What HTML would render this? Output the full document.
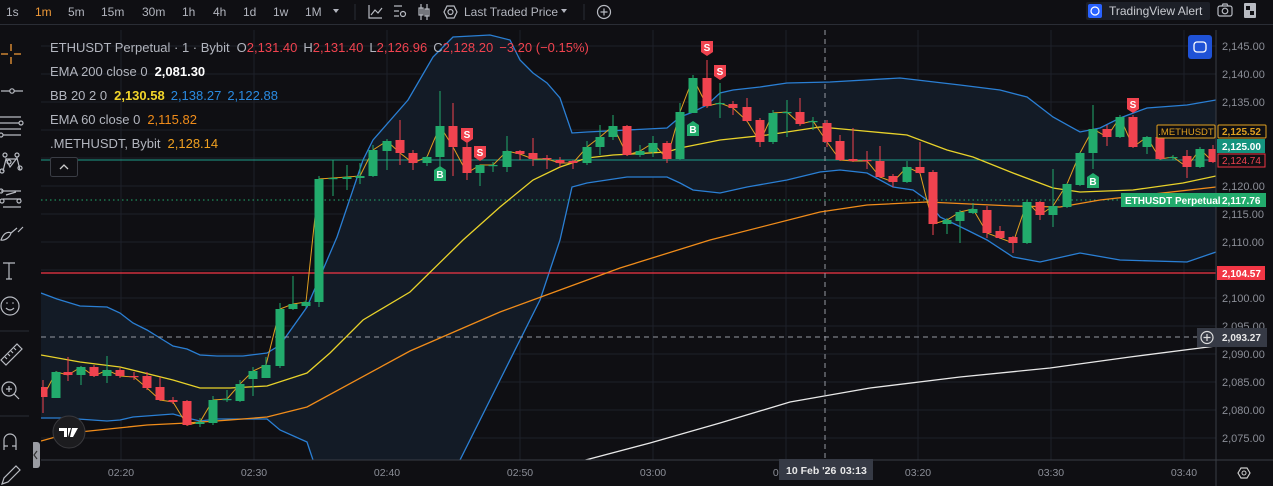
<!DOCTYPE html>
<html><head><meta charset="utf-8">
<style>
html,body{margin:0;padding:0;background:#0f0f13;width:1273px;height:486px;overflow:hidden;font-family:"Liberation Sans",sans-serif;}
svg text{font-family:"Liberation Sans",sans-serif;}
</style></head>
<body>
<svg id="s" width="1273" height="486" xmlns="http://www.w3.org/2000/svg">
<rect width="1273" height="486" fill="#0f0f13"/>
</svg>
<script>
const S=document.getElementById('s');let h='';
const G='#22ab6c',R='#f0434f';
for(let k=0;k<15;k++){let y=46+28*k;h+=`<line x1="41" y1="${y}" x2="1216" y2="${y}" stroke="#1d2029" stroke-width="1"/>`;}
const tx=[121,254,387,520,653,786,918,1051,1184];
tx.forEach(x=>h+=`<line x1="${x}" y1="30" x2="${x}" y2="460" stroke="#1d2029"/>`);
const up=[[41,293],[57,299],[80,306],[107,307],[120,313],[133,323],[147,330],[160,338],[173,346],[187,349],[200,355],[217,356],[243,356],[267,353],[280,345],[307,307],[337,237],[363,160],[373,140],[408,100],[433,57],[453,37],[490,35],[510,40],[520,60],[533,73],[547,83],[560,98],[572,133],[587,132],[667,128],[680,117],[693,112],[707,105],[720,93],[733,90],[760,87],[787,83],[830,82],[900,78],[960,85],[1000,90],[1027,97],[1053,117],[1080,132],[1100,128],[1120,118],[1147,108],[1187,105],[1216,100]];
const lo=[[41,418],[63,418],[107,421],[120,420],[133,417],[173,414],[187,418],[200,421],[217,419],[267,419],[280,430],[307,442],[313,460],[330,500],[440,500],[455,470],[500,380],[540,300],[560,240],[572,187],[587,183],[627,177],[667,177],[680,183],[693,190],[720,193],[747,187],[787,180],[820,172],[840,170],[867,173],[893,187],[913,190],[927,200],[940,217],[967,230],[987,240],[1013,257],[1040,262],[1080,253],[1120,260],[1187,262],[1216,252]];
const P=a=>a.map(p=>p.join(',')).join(' ');
h+=`<defs><clipPath id="c"><rect x="41" y="30" width="1175" height="430"/></clipPath></defs><g clip-path="url(#c)">`;
h+=`<polygon points="${P(up)} ${P(lo.slice().reverse())}" fill="#131b26"/>`;
h+=`<polyline points="${P(up)}" fill="none" stroke="#2a7fd4" stroke-width="1.3"/>`;
h+=`<polyline points="${P(lo)}" fill="none" stroke="#2a7fd4" stroke-width="1.3"/>`;
h+=`<line x1="41" y1="160" x2="1216" y2="160" stroke="#1e9c8a" stroke-width="1"/>`;
h+=`<line x1="41" y1="200" x2="1216" y2="200" stroke="#22ab6c" stroke-width="1" stroke-dasharray="1.5,3"/>`;
h+=`<line x1="41" y1="273" x2="1216" y2="273" stroke="#f23645" stroke-width="1.3"/>`;
h+=`<line x1="41" y1="337" x2="1200" y2="337" stroke="#9598a1" stroke-dasharray="5,4"/>`;
h+=`<line x1="825" y1="30" x2="825" y2="460" stroke="#9598a1" stroke-dasharray="5,4"/>`;
const mid=[[41,355],[80,362],[120,367],[173,380],[200,388],[230,388],[267,386],[307,373],[330,353],[363,320],[410,292],[463,240],[500,207],[533,180],[560,167],[587,158],[613,155],[667,152],[680,148],[720,140],[767,135],[820,127],[853,130],[907,135],[947,150],[973,157],[1013,173],[1053,188],[1080,192],[1133,190],[1183,183],[1216,176]];
h+=`<polyline points="${P(mid)}" fill="none" stroke="#e8d22a" stroke-width="1.3"/>`;
const e60=[[41,441],[70,433],[147,425],[187,423],[230,420],[267,417],[307,407],[410,351],[500,312],[560,290],[620,268],[710,240],[820,212],[867,205],[927,202],[1013,206],[1060,207],[1100,200],[1216,187]];
h+=`<polyline points="${P(e60)}" fill="none" stroke="#f08c1a" stroke-width="1.3"/>`;
const e200=[[578,462],[650,443],[720,423],[790,402],[870,388],[960,377],[1050,368],[1130,357],[1216,346]];
h+=`<polyline points="${P(e200)}" fill="none" stroke="#e8e8e8" stroke-width="1.3"/>`;
const C=[[43,387,397,380,413],[56,398,372,371,398],[68,372,375,357,381],[81,375,367,366,385],[94,367,376,365,377],[107,376,370,356,383],[120,370,376,368,378],[134,376,377,372,380],[147,376,388,372,390],[160,387,400,377,401],[173,400,402,397,404],[187,401,425,400,426],[200,424,422,418,427],[213,423,400,396,425],[227,400,399,390,402],[240,401,384,380,402],[253,379,371,367,396],[266,378,365,357,378],[280,366,309,303,368],[293,309,304,276,310],[306,306,302,300,308],[319,302,179,176,307],[333,179,178,160,196],[347,179,177,165,190],[360,178,176,163,184],[373,176,150,145,177],[387,151,141,139,170],[400,140,153,120,165],[413,153,163,150,170],[427,163,157,156,166],[440,157,126,91,178],[453,126,147,103,176],[467,147,173,130,180],[480,173,165,165,186],[493,166,165,162,172],[507,167,151,136,172],[520,151,154,150,160],[533,153,159,138,166],[547,158,159,155,169],[560,160,163,157,167],[573,161,163,160,169],[587,163,147,141,165],[600,147,137,125,155],[613,137,126,115,140],[627,126,155,125,156],[640,155,151,145,157],[653,152,143,136,157],[667,143,159,141,163],[680,159,112,103,160],[693,113,78,75,113],[707,78,106,60,108],[720,104,103,83,118],[733,104,108,101,115],[747,107,121,98,122],[760,120,142,118,147],[773,142,113,110,144],[787,113,112,100,137],[800,112,124,98,126],[813,122,121,117,130],[827,123,142,120,147],[840,141,160,135,161],[853,159,161,128,162],[867,160,161,151,169],[880,161,177,146,178],[893,176,182,174,187],[907,182,167,161,183],[920,167,173,142,174],[933,172,224,170,235],[947,224,220,218,234],[960,221,212,210,243],[973,213,209,203,214],[987,210,233,206,238],[1000,231,238,226,239],[1013,237,243,236,253],[1027,243,202,200,244],[1040,202,215,201,220],[1053,215,206,169,227],[1067,207,184,183,208],[1080,185,153,152,186],[1093,153,129,105,169],[1107,129,137,125,146],[1120,137,117,115,138],[1133,117,147,115,148],[1147,147,137,136,154],[1160,137,159,136,160],[1173,158,157,155,160],[1187,156,167,150,178],[1200,167,149,147,168],[1213,149,162,145,163]];
h+=`<polyline points="${C.map(c=>c[0]+','+c[2]).join(' ')}" fill="none" stroke="#e0a020" stroke-width="1"/>`;
C.forEach(([x,o,c,hi,l])=>{const col=c<=o?G:R;const t=Math.min(o,c),b=Math.max(o,c);
h+=`<line x1="${x}" y1="${hi}" x2="${x}" y2="${l}" stroke="${col}" stroke-width="1"/>`;
h+=`<rect x="${x-4.5}" y="${t}" width="9" height="${Math.max(b-t,1.2)}" fill="${col}"/>`;});
h+='</g>';
[[467,135],[480,153],[707,48],[720,72],[1133,105]].forEach(([x,y])=>{h+=`<path d="M${x-6} ${y-7}h12v11l-6 4l-6-4z" fill="${R}"/><text x="${x}" y="${y+3}" font-size="10" font-weight="bold" fill="#fff" text-anchor="middle">S</text>`;});
[[440,173],[693,128],[1093,180]].forEach(([x,y])=>{h+=`<path d="M${x-6} ${y+8}h12v-11l-6-4l-6 4z" fill="${G}"/><text x="${x}" y="${y+5}" font-size="10" font-weight="bold" fill="#fff" text-anchor="middle">B</text>`;});
h+=`<line x1="1216" y1="30" x2="1216" y2="486" stroke="#3a3d45"/><line x1="41" y1="460" x2="1273" y2="460" stroke="#3a3d45"/>`;
for(let k=0;k<15;k++){let y=46+28*k,p=(2145-5*k).toLocaleString('en-US')+'.00';h+=`<text x="1222" y="${y+4}" font-size="11" fill="#8b8e97">${p}</text>`;}
const tl=['02:20','02:30','02:40','02:50','03:00','','03:20','03:30','03:40'];
tx.forEach((x,i)=>{if(tl[i])h+=`<text x="${x}" y="476" font-size="10.5" fill="#8b8e97" text-anchor="middle">${tl[i]}</text>`;});
h+=`<text x="786" y="476" font-size="10.5" fill="#8b8e97" text-anchor="middle">03:10</text>`;
h+=`<rect x="779" y="459" width="94" height="21" fill="#363a45"/><text x="786" y="474" font-size="10.5" font-weight="bold" fill="#e8e8e8">10 Feb '26</text><text x="840" y="474" font-size="10.5" font-weight="bold" fill="#e8e8e8">03:13</text>`;
h+=`<rect x="1157" y="125" width="58" height="13" rx="1" fill="#0f0f13" stroke="#e0a020"/><text x="1186" y="135" font-size="9.5" fill="#e0a020" text-anchor="middle">.METHUSDT</text>`;
h+=`<rect x="1218" y="125" width="48" height="13" rx="1" fill="#0f0f13" stroke="#e0a020"/><text x="1222" y="135" font-size="10" font-weight="bold" fill="#e0a020">2,125.52</text>`;
h+=`<rect x="1217" y="139" width="48" height="14" fill="#14937e"/><text x="1222" y="150" font-size="10" font-weight="bold" fill="#fff">2,125.00</text>`;
h+=`<rect x="1218" y="154" width="47" height="13" fill="#0f0f13" stroke="#f23645"/><text x="1222" y="164" font-size="10" fill="#f0434f">2,124.74</text>`;
h+=`<rect x="1121" y="193" width="145" height="14" fill="#22ab6c"/><text x="1125" y="204" font-size="10" font-weight="bold" fill="#fff">ETHUSDT Perpetual</text><text x="1222" y="204" font-size="10" font-weight="bold" fill="#fff">2,117.76</text>`;
h+=`<rect x="1217" y="266" width="48" height="14" fill="#f23645"/><text x="1222" y="277" font-size="10" font-weight="bold" fill="#fff">2,104.57</text>`;
h+=`<rect x="1197" y="328" width="70" height="19" fill="#363a45"/><circle cx="1207" cy="337.5" r="6" fill="none" stroke="#ddd" stroke-width="1.2"/><path d="M1207 334v7M1203.5 337.5h7" stroke="#ddd" stroke-width="1.2"/><text x="1222" y="341" font-size="10" font-weight="bold" fill="#e8e8e8">2,093.27</text>`;
h+=`<path d="M1238 473l3-5h6l3 5l-3 5h-6z" fill="none" stroke="#ccc" stroke-width="1.2"/><circle cx="1244" cy="473" r="2" fill="none" stroke="#ccc"/>`;
h+=`<rect x="1188" y="35" width="24" height="24" rx="3" fill="#1f52d6"/><rect x="1194" y="42" width="12" height="10" rx="3" fill="none" stroke="#fff" stroke-width="1.3"/>`;
h+=`<text font-size="13" y="52"><tspan x="50" fill="#b2b5be">ETHUSDT Perpetual · 1 · Bybit</tspan><tspan fill="#b2b5be" dx="7">O</tspan><tspan fill="#f0434f">2,131.40</tspan><tspan fill="#b2b5be" dx="6">H</tspan><tspan fill="#f0434f">2,131.40</tspan><tspan fill="#b2b5be" dx="6">L</tspan><tspan fill="#f0434f">2,126.96</tspan><tspan fill="#b2b5be" dx="6">C</tspan><tspan fill="#f0434f">2,128.20</tspan><tspan fill="#f0434f" dx="6">−3.20 (−0.15%)</tspan></text>`;
h+=`<text font-size="13" y="76"><tspan x="50" fill="#b2b5be">EMA 200 close 0</tspan><tspan dx="7" fill="#fff" font-weight="bold">2,081.30</tspan></text>`;
h+=`<text font-size="13" y="100"><tspan x="50" fill="#b2b5be">BB 20 2 0</tspan><tspan dx="7" fill="#f2d52a" font-weight="bold">2,130.58</tspan><tspan dx="6" fill="#2a8ae0">2,138.27</tspan><tspan dx="6" fill="#2a8ae0">2,122.88</tspan></text>`;
h+=`<text font-size="13" y="124"><tspan x="50" fill="#b2b5be">EMA 60 close 0</tspan><tspan dx="7" fill="#f08c1a">2,115.82</tspan></text>`;
h+=`<text font-size="13" y="148"><tspan x="50" fill="#b2b5be">.METHUSDT, Bybit</tspan><tspan dx="7" fill="#f0a020">2,128.14</tspan></text>`;
h+=`<rect x="50.5" y="157.5" width="27" height="19" rx="2" fill="#0f0f13" stroke="#3a3d45"/><path d="M60 169l4-4l4 4" fill="none" stroke="#ccc" stroke-width="1.3"/>`;
h+=`<circle cx="69" cy="432" r="16" fill="#1c1c1f" stroke="#3a3a3e" stroke-width="1"/><path d="M59 428h8v9h-3v-6h-5z M68 428h3l-3 9z M72 428h6l-5 9h-3z" fill="#fff"/>`;
h+=`<rect x="31" y="442" width="9" height="26" rx="3" fill="#9a9ca3"/><path d="M37 451l-3 4l3 4" fill="none" stroke="#333" stroke-width="1.2"/>`;
h+=`<rect x="0" y="26" width="33" height="460" fill="#0f0f13"/>`;
h+=`<path d="M11 44v7M11 57v7M1 54h7M14 54h7" stroke="#f09a38" stroke-width="1.3"/>`;
const st='fill="none" stroke="#b8bbc2" stroke-width="1.2"';
h+=`<path d="M1 91h9M14 91h9" ${st}/><circle cx="12" cy="91" r="2.2" ${st}/>`;
h+=`<path d="M0 117h21M0 123h19M0 129h21M3 135h18" ${st}/><circle cx="21" cy="123" r="2" ${st}/><circle cx="1" cy="135" r="2" ${st}/>`;
h+=`<path d="M3 171l3-12l4 8l7-9l3 12M6 159l11 0" ${st}/><circle cx="5" cy="155" r="2" ${st}/><circle cx="17" cy="155" r="2" ${st}/><circle cx="9" cy="162" r="2" ${st}/><circle cx="2" cy="171" r="2" ${st}/><circle cx="20" cy="168" r="2" ${st}/>`;
h+=`<path d="M1 191h20M3 199h18M3 207h18M6 195l10-3" ${st}/><circle cx="1" cy="191" r="2" ${st}/><circle cx="2" cy="201" r="2" ${st}/><circle cx="19" cy="201" r="2" ${st}/>`;
h+=`<path d="M1 240c2-6 6-9 10-7c-1 4-6 8-10 7zM11 233l6-5M18 232l5-5" ${st}/>`;
h+=`<path d="M3 263h12M9 263v16M6 279h6" ${st}/>`;
h+=`<circle cx="10" cy="306" r="9" ${st}/><circle cx="7" cy="303" r="0.8" fill="#b8bbc2"/><circle cx="13" cy="303" r="0.8" fill="#b8bbc2"/><path d="M6 308q4 4 8 0" ${st}/>`;
h+=`<line x1="0" y1="331" x2="29" y2="331" stroke="#2a2d35"/>`;
h+=`<path d="M1 360l16-16l5 5l-16 16z M5 357l2 2M8 354l2 2M11 351l2 2M14 348l2 2" ${st}/>`;
h+=`<circle cx="9" cy="389" r="7" ${st}/><path d="M9 386v6M6 389h6M14 394l5 5" ${st}/>`;
h+=`<line x1="0" y1="416" x2="29" y2="416" stroke="#2a2d35"/>`;
h+=`<path d="M4 450v-10a6 6 0 0 1 12 0v10M4 446h4M12 446h4" ${st}/>`;
h+=`<path d="M2 484l2-6l12-12l4 4l-12 12z" ${st}/>`;
h+=`<line x1="0" y1="24.5" x2="1273" y2="24.5" stroke="#2a2d35"/>`;
const tb=[['1s',6,'#b2b5be'],['1m',35,'#f09a38'],['5m',68,'#b2b5be'],['15m',101,'#b2b5be'],['30m',142,'#b2b5be'],['1h',182,'#b2b5be'],['4h',213,'#b2b5be'],['1d',243,'#b2b5be'],['1w',273,'#b2b5be'],['1M',305,'#b2b5be']];
tb.forEach(([t,x,c])=>h+=`<text x="${x}" y="16" font-size="12" fill="${c}">${t}</text>`);
h+=`<path d="M333 9h6l-3 4z" fill="#b2b5be"/><line x1="355" y1="4" x2="355" y2="20" stroke="#2a2d35"/>`;
h+=`<path d="M369 5v13h13M371 15l4-5l3 3l4-5" ${st}/>`;
h+=`<path d="M394 6h8M394 11h5M394 16h5" ${st}/><circle cx="403" cy="14" r="2.5" ${st}/>`;
h+=`<path d="M421 4v16M427 4v16" ${st}/><rect x="419" y="8" width="4" height="7" ${st}/><rect x="425" y="9" width="4" height="7" ${st}/>`;
h+=`<path d="M444 12l3-6h7l3 6l-3 6h-7z" ${st}/><circle cx="450.5" cy="12" r="2.5" ${st}/>`;
h+=`<text x="464" y="16" font-size="12" fill="#b2b5be">Last Traded Price</text><path d="M561 9h6l-3 4z" fill="#b2b5be"/>`;
h+=`<line x1="584" y1="4" x2="584" y2="20" stroke="#2a2d35"/><circle cx="604" cy="12" r="6.5" ${st}/><path d="M604 8.5v7M600.5 12h7" ${st}/>`;
h+=`<rect x="1086" y="2" width="124" height="18" rx="2" fill="#1c1f27"/><rect x="1088" y="4" width="14" height="14" rx="2" fill="#2962ff"/><circle cx="1095" cy="11" r="4" fill="none" stroke="#fff" stroke-width="1.2"/><text x="1109" y="15" font-size="12" fill="#c8cad0">TradingView Alert</text>`;
h+=`<rect x="1218" y="6" width="14" height="10" rx="2" ${st}/><circle cx="1225" cy="11" r="2.8" ${st}/><path d="M1222 6l1-2h4l1 2" ${st}/>`;
h+=`<rect x="1244" y="3" width="12" height="15" rx="1" fill="#b8bbc2"/><rect x="1246" y="6" width="4" height="4" fill="#0f0f13"/><rect x="1250" y="11" width="4" height="4" fill="#0f0f13"/>`;
S.innerHTML+=h;
</script>
</body></html>
